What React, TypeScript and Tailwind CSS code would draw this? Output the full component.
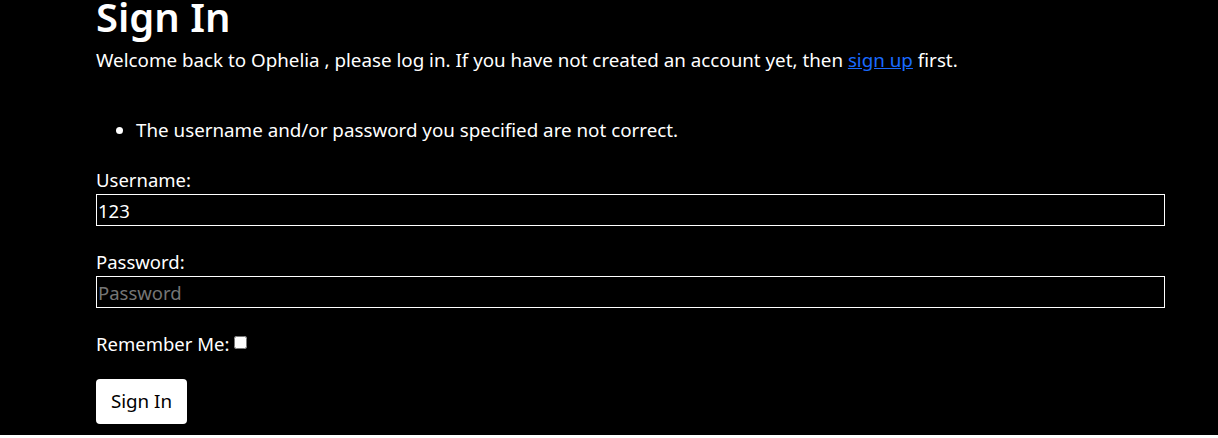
import { useState } from "react";

export default function App() {
  const [username, setUsername] = useState("123");
  const [password, setPassword] = useState("");
  const [remember, setRemember] = useState(false);

  return (
    <div className="min-h-[438px] w-full bg-black text-white font-['Noto_Sans',sans-serif]">
      <div className="w-[1069px] ml-[96px]">
        <h1 className="text-[40px] leading-[40px] font-semibold -mt-[3px]">Sign In</h1>
        <p className="mt-[11px] text-[18.8px] leading-[24px]">
          Welcome back to Ophelia , please log in. If you have not created an
          account yet, then{" "}
          <a href="#" className="text-[#1a6aff] underline">
            sign up
          </a>{" "}
          first.
        </p>

        <ul className="mt-[46px] list-disc pl-[40px] text-[18.8px] leading-[24px]">
          <li>The username and/or password you specified are not correct.</li>
        </ul>

        <form className="mt-[26px] text-[18.5px]" onSubmit={(e) => e.preventDefault()}>
          <label className="block leading-[24px]" htmlFor="username">
            Username:
          </label>
          <input
            id="username"
            className="mt-[2px] block w-full h-[32px] border border-white bg-black px-[1px] text-[18.5px] text-white outline-none"
            value={username}
            onChange={(e) => setUsername(e.target.value)}
          />

          <label className="mt-[24px] block leading-[24px]" htmlFor="password">
            Password:
          </label>
          <input
            id="password"
            type="password"
            placeholder="Password"
            className="mt-[2px] block w-full h-[32px] border border-white bg-black px-[1px] text-[18.5px] text-white outline-none placeholder:text-[#757575]"
            value={password}
            onChange={(e) => setPassword(e.target.value)}
          />

          <div className="mt-[24px] flex items-center leading-[24px]">
            <label htmlFor="remember">Remember Me:</label>
            <input
              id="remember"
              type="checkbox"
              className="ml-[5px] mb-[4px] h-[13px] w-[13px]"
              checked={remember}
              onChange={(e) => setRemember(e.target.checked)}
            />
          </div>

          <button
            type="submit"
            className="mt-[23px] h-[45px] w-[91px] rounded-[4px] bg-white text-[18.8px] text-black"
          >
            Sign In
          </button>
        </form>
      </div>
    </div>
  );
}
